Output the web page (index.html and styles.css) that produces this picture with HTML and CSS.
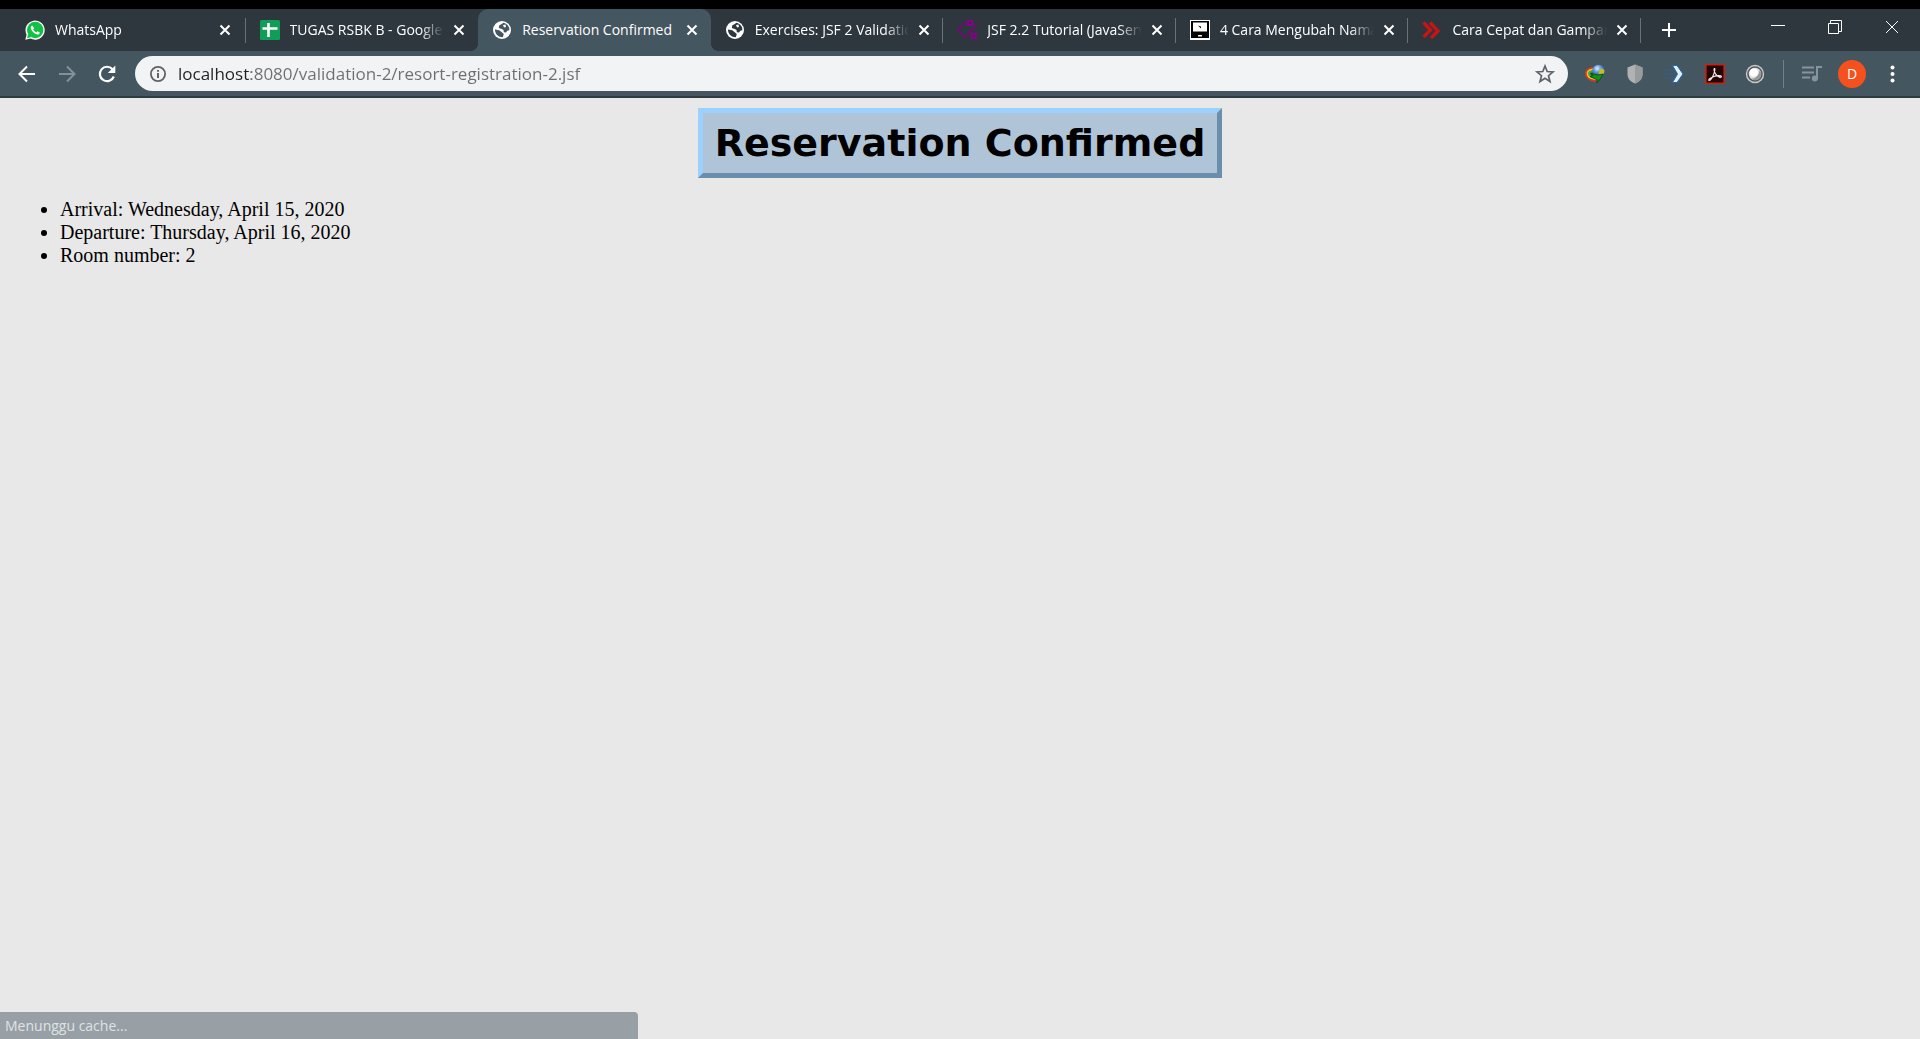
FILE: index.html
```html
<!DOCTYPE html>
<html lang="en">
<head>
<meta charset="utf-8">
<title>Reservation Confirmed</title>
<link rel="stylesheet" href="styles.css">
</head>
<body>
<header class="browser">
  <div class="tab-strip">
    <nav class="tabs" aria-label="Tabs">
      <div class="tab">
        <svg class="favicon" viewBox="0 0 20 20"><path d="M.3 19.800L1.600 14.600A9.600 9.600 0 1 1 5.600 18.600Z" fill="#fff"/><circle cx="10.200" cy="10" r="8.200" fill="#12c143"/><path d="M2 18.200l1.200-4.500 3.300 3.300z" fill="#12c143"/><path d="M7.300 5.500c-1.300.4-1.900 1.700-1.300 3.200 1 2.700 3 4.700 5.700 5.600 1.700.6 3-.4 3.100-1.900l-2.300-1.200-1.200 1.200c-1.500-.6-2.600-1.700-3.200-3.100l1-1z" fill="#fff"/></svg>
        <a class="title" href="#">WhatsApp</a>
        <button class="close" aria-label="Close tab"><svg viewBox="0 0 12 12"><path d="M1.500 1.500l9 9m0-9l-9 9"/></svg></button>
      </div>
      <div class="tab no-line">
        <svg class="favicon" viewBox="0 0 20 20"><rect width="20" height="20" rx="1.500" fill="#0f9d58"/><path d="M2.500 8.500h15M8.500 3v14" stroke="#fff" stroke-width="2.600"/></svg>
        <a class="title" href="#">TUGAS RSBK B - Google</a>
        <button class="close" aria-label="Close tab"><svg viewBox="0 0 12 12"><path d="M1.500 1.500l9 9m0-9l-9 9"/></svg></button>
      </div>
      <div class="tab active no-line">
        <svg class="favicon globe" viewBox="0 0 20 20"><circle cx="10" cy="10" r="9"/><path d="M11.500 2.800L9 4.500 7.300 5.300 6.800 8l3 1 1.700 1 .3 2.200 2.200.3 1.300-1.800 2-.4c.4-3.500-1.800-6.300-5.800-7.500zM2.900 9.500l4.300.8 2.600 2 2 1.700-1 3.200c-4.500 0-7.800-3.200-7.900-7.700z"/><path class="land" d="M11 5l2.500-.5L14 7l-2 .5z"/></svg>
        <a class="title" href="#" aria-current="page">Reservation Confirmed</a>
        <button class="close" aria-label="Close tab"><svg viewBox="0 0 12 12"><path d="M1.500 1.500l9 9m0-9l-9 9"/></svg></button>
      </div>
      <div class="tab">
        <svg class="favicon globe" viewBox="0 0 20 20"><circle cx="10" cy="10" r="9"/><path d="M11.500 2.800L9 4.500 7.300 5.300 6.800 8l3 1 1.700 1 .3 2.200 2.200.3 1.300-1.800 2-.4c.4-3.500-1.800-6.300-5.800-7.500zM2.900 9.500l4.300.8 2.600 2 2 1.700-1 3.200c-4.500 0-7.800-3.200-7.900-7.700z"/><path class="land" d="M11 5l2.500-.5L14 7l-2 .5z"/></svg>
        <a class="title" href="#">Exercises: JSF 2 Validation</a>
        <button class="close" aria-label="Close tab"><svg viewBox="0 0 12 12"><path d="M1.500 1.500l9 9m0-9l-9 9"/></svg></button>
      </div>
      <div class="tab">
        <svg class="favicon" viewBox="0 0 20 20"><path d="M9 1.500L1 9.500l8 9M20 4.500L10 15" fill="none" stroke="#800080" stroke-width="1.600"/><path d="M10 0h6v6h-6zM14 13h6v6h-6z" fill="#8a008a"/><path d="M12 2l2 2m0-2l-2 2m4 11h2m-2 2h2" stroke="#4d1858"/></svg>
        <a class="title" href="#">JSF 2.2 Tutorial (JavaServer</a>
        <button class="close" aria-label="Close tab"><svg viewBox="0 0 12 12"><path d="M1.500 1.500l9 9m0-9l-9 9"/></svg></button>
      </div>
      <div class="tab">
        <svg class="favicon" viewBox="0 0 20 20"><path d="M0 0h20v20H0z" fill="#fff"/><path d="M1 1h18v17H1z"/><path d="M3 2.500h14v9H3z" fill="#fff"/><path d="M8 5.500l3 1v2z"/><path d="M8 15h4v1.500H8z" fill="#fff"/></svg>
        <a class="title" href="#">4 Cara Mengubah Nama</a>
        <button class="close" aria-label="Close tab"><svg viewBox="0 0 12 12"><path d="M1.500 1.500l9 9m0-9l-9 9"/></svg></button>
      </div>
      <div class="tab">
        <svg class="favicon" viewBox="0 0 20 20"><path d="M1.500 2.500l7 7.500-7 7M8 2.500l8 8.500-7 7" fill="none" stroke="#c81414" stroke-width="3.400"/></svg>
        <a class="title" href="#">Cara Cepat dan Gampang</a>
        <button class="close" aria-label="Close tab"><svg viewBox="0 0 12 12"><path d="M1.500 1.500l9 9m0-9l-9 9"/></svg></button>
      </div>
    </nav>
    <button class="new-tab" aria-label="New tab"><svg viewBox="0 0 16 16"><path d="M8 1v14M1 8h14" stroke="#fff" stroke-width="2"/></svg></button>
    <div class="window-controls">
      <button aria-label="Minimize"><svg viewBox="0 0 14 14"><path d="M0 5.500h14"/></svg></button>
      <button aria-label="Restore"><svg viewBox="0 0 14 14"><path d="M.5 3.500h10v10H.5zM2.500 3V.5h11v11H11"/></svg></button>
      <button aria-label="Close"><svg viewBox="0 0 14 14"><path d="M1 1l12 12M13 1L1 13"/></svg></button>
    </div>
  </div>

  <div class="toolbar">
    <div class="history">
      <button aria-label="Back"><svg viewBox="0 0 20 20"><path d="M18 10H3.500M10 2.500L2.500 10l7.500 7.500" fill="none" stroke="#fff" stroke-width="2"/></svg></button>
      <button aria-label="Forward"><svg viewBox="0 0 20 20"><path d="M2 10h14.500M10 2.500l7.500 7.500-7.500 7.500" fill="none" stroke="#84919a" stroke-width="2"/></svg></button>
      <button aria-label="Reload"><svg viewBox="0 0 20 20"><path d="M16.800 12.500A7.200 7.200 0 1 1 15.500 5.200" fill="none" stroke="#fff" stroke-width="2.200"/><path d="M18.300 1.500v7.500h-7.500z" fill="#fff"/></svg></button>
    </div>
    <form class="omnibox">
      <svg class="info" viewBox="0 0 16 16"><circle cx="8" cy="8" r="7.100" fill="none" stroke="#5f6368" stroke-width="1.800"/><path d="M8 7v5M8 4v1.700" stroke="#5f6368" stroke-width="2"/></svg>
      <input class="url" type="text" aria-label="Address" value="localhost:8080/validation-2/resort-registration-2.jsf">
      <button type="button" aria-label="Bookmark this page"><svg viewBox="0 0 20 20"><path d="M10 2l2.200 5.500 5.800.4-4.500 3.800 1.500 5.800-5-3.200-5 3.200 1.500-5.800L2 7.900l5.800-.4z" fill="none" stroke="#5f6368" stroke-width="1.700"/></svg></button>
    </form>
    <div class="extensions">
      <button aria-label="Download manager"><svg viewBox="0 0 20 20"><defs><radialGradient id="globe" cx=".4" cy=".3" r=".7"><stop offset="0" stop-color="#e2eefc"/><stop offset=".45" stop-color="#5d92d8"/><stop offset="1" stop-color="#1d459b"/></radialGradient></defs><g fill="none" stroke-width="1.800"><path d="M8 4C2 4.500-.5 8 1.500 12s7 5.500 10 4.500" stroke="#d3382a"/><path d="M8 5.500C3 6 1.500 8.500 3 11.500s6 4 9 3" stroke="#f2c522"/><path d="M8 7C4.500 7.500 3.500 9 4.500 11s4 3 7 2" stroke="#2fb045"/></g><circle cx="13.500" cy="7" r="6.200" fill="url(#globe)"/><path d="M15 5c2-1 4 0 4.500 2-.2 3-2 4-4 4.500l-2-2z" fill="#c2bd28"/><path d="M6 9.500l7 1.500 5-1-2 4-4 5v-3.500l-7-3 3-1z" fill="#129512" stroke="#0a4310" stroke-width=".8"/></svg></button>
      <button aria-label="Shield"><svg viewBox="0 0 20 20"><path d="M10 .5l7.500 3V10c0 5-3 7.800-7.500 9.500C5.500 17.800 2.500 15 2.500 10V3.500z" fill="#b0b2b3"/><path d="M10 .5l7.500 3V10c0 5-3 7.800-7.500 9.500z" fill="#999b9d"/></svg></button>
      <button aria-label="Transfer"><svg viewBox="0 0 20 20"><path d="M0 6h10M-1 10h12M0 14h10" stroke="#315e8f"/><path d="M7.500 1.500h4.500L18 10l-6 8.500H7.500L12.500 10z" fill="#e2f1ff" stroke="#2666a8"/></svg></button>
      <button aria-label="PDF"><svg viewBox="0 0 20 20"><path d="M.8.8h18.400v18.400H.8z" fill="#250608" stroke="#c9220f" stroke-width="1.600"/><path d="M9.400 4.500c-1.200.4.200 4.500 2 6.500 1.800 2 4.800 3 5 1.700.2-1.500-5-1.200-8 0-2.900 1.200-5.400 3-4.400 3.700 1.300.8 4-3.800 5-7 .7-2.600 1.200-5.100.4-4.900z" fill="none" stroke="#f1e8e8" stroke-width="1.200"/></svg></button>
      <button aria-label="Recorder"><svg viewBox="0 0 20 20"><circle cx="10" cy="10" r="9.200" fill="#c8c9ca"/><circle cx="10" cy="10" r="7" fill="#e2e2e2" stroke="#57595a" stroke-width="1.600"/><path d="M14.500 6a6 6 0 0 1-8.500 8.500c4 .5 8-2.500 8.500-8.500z" fill="#96999b"/><circle cx="8.800" cy="8.500" r="4" fill="#fff"/></svg></button>
    </div>
    <div class="profile">
      <button aria-label="Media controls"><svg viewBox="0 0 20 20"><path d="M0 3.500h12M0 8.500h12M0 13.500h8" stroke="#87949c" stroke-width="2"/><circle cx="12.800" cy="14.500" r="3" fill="#87949c"/><path d="M15 15V3h5" fill="none" stroke="#87949c" stroke-width="2"/></svg></button>
      <button class="avatar" aria-label="Profile">D</button>
      <button aria-label="Menu"><svg viewBox="0 0 20 20" fill="#fff"><circle cx="10.500" cy="3.500" r="2"/><circle cx="10.500" cy="10" r="2"/><circle cx="10.500" cy="16.500" r="2"/></svg></button>
    </div>
  </div>
</header>

<main class="page">
  <h1 class="heading">Reservation Confirmed</h1>
  <ul class="details">
    <li>Arrival: Wednesday, April 15, 2020</li>
    <li>Departure: Thursday, April 16, 2020</li>
    <li>Room number: 2</li>
  </ul>
</main>
<div class="status" role="status">Menunggu cache...</div>
</body>
</html>
```
FILE: styles.css
```css
* { box-sizing: border-box; }

body {
  margin: 0;
  min-height: 100vh;
  background: #e8e8e8;
  color: #000;
  font-family: "Liberation Serif", serif;
}

button {
  display: flex;
  align-items: center;
  justify-content: center;
  flex: none;
  margin: 0;
  padding: 0;
  border: 0;
  background: none;
  color: inherit;
  font: inherit;
}

svg { display: block; flex: none; }

.browser {
  border-top: 9px solid #000;
  border-bottom: 2px solid #2f3b41;
  background: #44565f;
  color: #fff;
  font-family: "Open Sans", "Noto Sans", sans-serif;
  font-size: 14px;
}

/* Tabs */
.tab-strip {
  display: flex;
  height: 42px;
  padding-left: 13px;
  background: #2d373d;
}

.tabs {
  display: flex;
  flex: 0 1 1628px;
  min-width: 0;
}

.tab {
  --tab-color: #2d373d;
  position: relative;
  display: flex;
  flex: 1 1 0;
  align-items: center;
  min-width: 0;
  padding: 0 13px 0 14px;
}

.tab:first-child { padding: 0 15px 0 12px; }

.tab::after {
  content: "";
  position: absolute;
  right: 0;
  top: 9px;
  width: 1px;
  height: 25px;
  background: #65737a;
}

.tab.no-line::after { display: none; }

.tab.active {
  --tab-color: #44565f;
  border-radius: 10px 10px 0 0;
  background: var(--tab-color);
}

.tab.active::before {
  content: "";
  position: absolute;
  left: -8px;
  right: -8px;
  bottom: 0;
  height: 8px;
  background:
    radial-gradient(circle at 0 0, transparent 8px, #44565f 8px) left / 8px 8px no-repeat,
    radial-gradient(circle at 100% 0, transparent 8px, #44565f 8px) right / 8px 8px no-repeat;
}

.favicon { width: 20px; height: 20px; }

.globe { fill: var(--tab-color); }
.globe circle,
.globe .land { fill: #fff; }

.title {
  flex: 1;
  min-width: 0;
  margin: 0 9px 0 10px;
  overflow: hidden;
  color: inherit;
  line-height: 20px;
  text-decoration: none;
  white-space: nowrap;
  -webkit-mask-image: linear-gradient(to left, transparent, #000 24px);
  mask-image: linear-gradient(to left, transparent, #000 24px);
}

.active .title { -webkit-mask-image: none; mask-image: none; }

.close svg {
  width: 12px;
  height: 12px;
  fill: none;
  stroke: #fff;
  stroke-width: 2;
}

.new-tab { width: 56px; }
.new-tab svg { width: 16px; height: 16px; }

.window-controls {
  display: flex;
  height: 36px;
  margin-left: auto;
}

.window-controls button { width: 57px; }

.window-controls svg {
  width: 14px;
  height: 14px;
  fill: none;
  stroke: #fff;
}

/* Toolbar */
.toolbar {
  display: flex;
  align-items: center;
  height: 45px;
  padding: 0 18px 0 17px;
}

.toolbar svg { width: 20px; height: 20px; overflow: visible; }

.history {
  display: flex;
  gap: 20px;
  margin-right: 18px;
}

.omnibox {
  display: flex;
  flex: 1;
  align-items: center;
  height: 35px;
  padding: 0 13px 0 15px;
  border-radius: 18px;
  background: #f1f3f4;
}

.omnibox .info { width: 16px; height: 16px; }

.url {
  flex: 1;
  min-width: 0;
  margin: 0 12px;
  padding: 0;
  border: 0;
  outline: 0;
  background: linear-gradient(to right, #202124 73px, #6b6f73 73px);
  -webkit-background-clip: text;
  background-clip: text;
  color: transparent;
  font: 17px/24px "Open Sans", "Noto Sans", sans-serif;
}

.extensions {
  display: flex;
  gap: 20px;
  padding: 0 18px 0 17px;
}

.profile {
  display: flex;
  align-items: center;
  gap: 16px;
  padding-left: 18px;
  border-left: 1px solid #71808a;
}

.profile .avatar {
  width: 28px;
  height: 28px;
  border-radius: 50%;
  background: #f4511e;
}

/* Document */
.page { padding: 10px; }

.heading {
  width: fit-content;
  margin: 0 auto;
  padding: 6px 12px;
  border: 5px solid;
  border-color: #9bd0ff #6b8eae #6b8eae #9bd0ff;
  background: #b0c4d8;
  font: bold 38px/48px "DejaVu Sans", sans-serif;
}

.details {
  margin: 20px 0;
  padding-left: 50px;
  font-size: 20px;
  line-height: 23px;
}

.status {
  position: fixed;
  left: 0;
  bottom: 0;
  width: 638px;
  max-width: 100%;
  padding: 4px 5px 3px;
  border-radius: 0 4px 0 0;
  background: #98a0a5;
  color: #dfe3e5;
  font: 14px/20px "Open Sans", "Noto Sans", sans-serif;
}
```
